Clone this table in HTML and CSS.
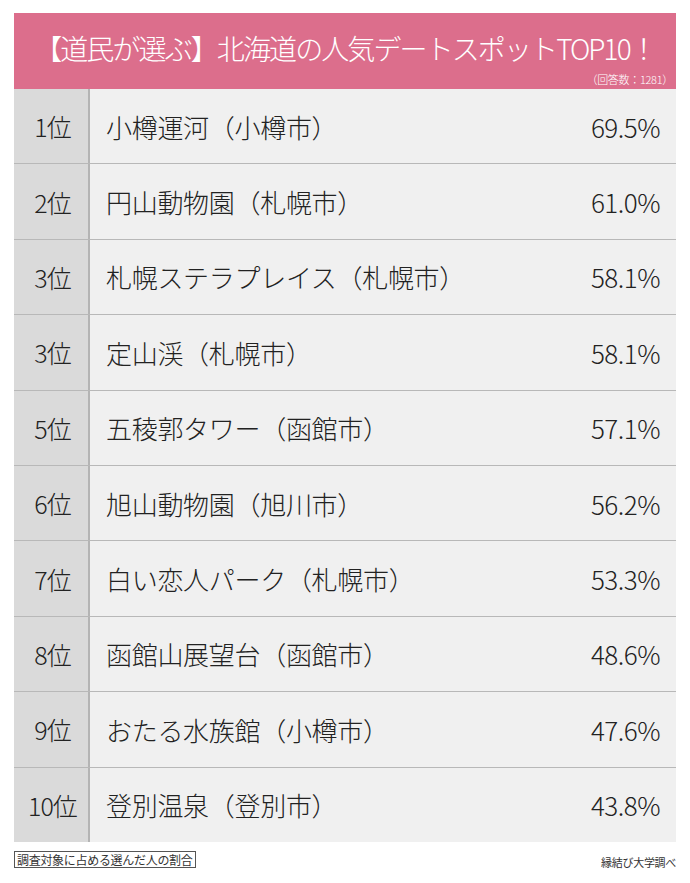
FILE: index.html
```html
<!DOCTYPE html>
<html lang="ja">
<head>
<meta charset="utf-8">
<link rel="stylesheet" href="styles.css">
</head>
<body>
<div class="wrap">
  <header class="head">
    <h1 class="title">【道民が選ぶ】北海道の人気デートスポットTOP10！</h1>
    <div class="sub">（回答数：1281）</div>
  </header>
  <div class="table">
    <div class="row"><div class="rank">1位</div><div class="name">小樽運河（小樽市）</div><div class="pct">69.5%</div></div>
    <div class="row"><div class="rank">2位</div><div class="name">円山動物園（札幌市）</div><div class="pct">61.0%</div></div>
    <div class="row"><div class="rank">3位</div><div class="name">札幌ステラプレイス（札幌市）</div><div class="pct">58.1%</div></div>
    <div class="row"><div class="rank">3位</div><div class="name">定山渓（札幌市）</div><div class="pct">58.1%</div></div>
    <div class="row"><div class="rank">5位</div><div class="name">五稜郭タワー（函館市）</div><div class="pct">57.1%</div></div>
    <div class="row"><div class="rank">6位</div><div class="name">旭山動物園（旭川市）</div><div class="pct">56.2%</div></div>
    <div class="row"><div class="rank">7位</div><div class="name">白い恋人パーク（札幌市）</div><div class="pct">53.3%</div></div>
    <div class="row"><div class="rank">8位</div><div class="name">函館山展望台（函館市）</div><div class="pct">48.6%</div></div>
    <div class="row"><div class="rank">9位</div><div class="name">おたる水族館（小樽市）</div><div class="pct">47.6%</div></div>
    <div class="row"><div class="rank">10位</div><div class="name">登別温泉（登別市）</div><div class="pct">43.8%</div></div>
  </div>
  <footer class="foot">
    <span class="note">調査対象に占める選んだ人の割合</span>
    <span class="src">縁結び大学調べ</span>
  </footer>
</div>
</body>
</html>
```
FILE: styles.css
```css
* { box-sizing: border-box; }
html, body { margin: 0; padding: 0; background: #fff; }
body {
  font-family: "Noto Sans CJK JP", "Noto Sans", sans-serif;
  color: #222;
}
.wrap {
  width: 662px;
  margin: 13px 0 0 14px;
}
.head {
  background: #dc6e8c;
  height: 76px;
  display: flex;
  flex-direction: column;
  color: #fff;
}
.title {
  margin: 0;
  padding-top: 17px;
  font-size: 28px;
  font-weight: 300;
  line-height: 36px;
  letter-spacing: -1.9px;
  text-align: center;
  white-space: nowrap;
}
.sub {
  align-self: flex-end;
  font-size: 11px;
  font-weight: 300;
  line-height: 14px;
  margin-top: 6px;
  padding-right: 3px;
  letter-spacing: -0.3px;
}
.table {
  display: flex;
  flex-direction: column;
}
.row {
  height: 75.4px;
  display: grid;
  grid-template-columns: 76px 1fr auto;
  align-items: stretch;
  background: #f0f0f0;
  border-bottom: 1.4px solid #b8b8b8;
  font-weight: 300;
}
.row:last-child { border-bottom: none; height: 74px; }
.rank {
  background: #dadada;
  border-right: 2px solid #b4b4b4;
  display: flex;
  align-items: center;
  justify-content: center;
  font-size: 25px;
  letter-spacing: -1px;
  padding-left: 3px;
}
.name {
  display: flex;
  align-items: center;
  padding-left: 16px;
  font-size: 26px;
  letter-spacing: -0.3px;
  white-space: nowrap;
}
.pct {
  display: flex;
  align-items: center;
  padding-right: 16px;
  font-size: 26px;
  letter-spacing: -0.5px;
}
.foot {
  display: flex;
  justify-content: space-between;
  align-items: center;
  margin-top: 8px;
}
.note {
  border: 1px solid #555;
  font-size: 12px;
  line-height: 15px;
  padding: 0 2px;
  color: #333;
  letter-spacing: -0.3px;
}
.src {
  font-size: 11px;
  color: #333;
  margin-top: 4px;
  letter-spacing: -0.3px;
}
```
